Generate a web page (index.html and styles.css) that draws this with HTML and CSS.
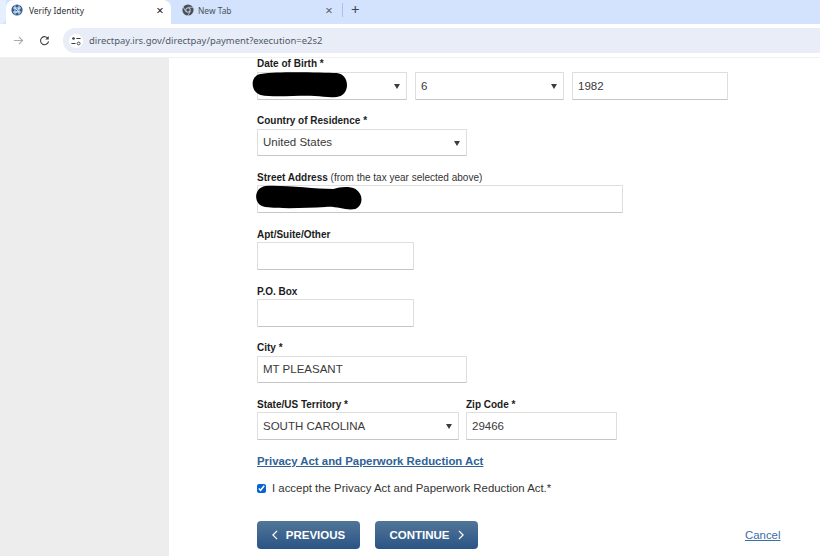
FILE: index.html
```html
<!DOCTYPE html>
<html lang="en">
<head>
<meta charset="utf-8">
<title>Verify Identity</title>
<link rel="stylesheet" href="styles.css">
</head>
<body>
<header class="chrome">
  <div class="tabstrip">
    <div class="tab-stub"></div>
    <div class="tab active">
      <svg class="favicon" viewBox="0 0 12 12"><circle cx="6" cy="6" r="5.6" fill="#2f5f96"/><path d="M2 4h8M2 8h8M4 1.500v9M8 1.500v9M4 4l4 4M8 4L5 9" stroke="#dfe9f5" stroke-width="1" fill="none"/></svg>
      <span class="tab-title">Verify Identity</span>
      <span class="tab-close dark">×</span>
    </div>
    <div class="tab inactive">
      <svg class="favicon" viewBox="0 0 12 12"><circle cx="6" cy="6" r="5.600" fill="#4a4f55"/><circle cx="6" cy="6" r="2.600" fill="#d3e3fd"/><circle cx="6" cy="6" r="1.800" fill="#4a4f55"/><path d="M6 3.300h5M3.700 7.400L1.200 3M8.300 7.400L5.800 11.500" stroke="#d3e3fd" stroke-width=".7"/></svg>
      <span class="tab-title grey">New Tab</span>
      <span class="tab-close">×</span>
    </div>
    <span class="divider"></span>
    <span class="plus">+</span>
  </div>
  <div class="toolbar">
    <svg class="nav-icon forward" viewBox="0 0 12 12"><path d="M1 6h9.500M6.500 2l4 4-4 4" fill="none" stroke="#a9abae" stroke-width="1.200"/></svg>
    <svg class="nav-icon reload" viewBox="0 0 12 12"><path d="M10 4.200A4.400 4.400 0 1 0 10.400 7" fill="none" stroke="#3c4043" stroke-width="1.200"/><path d="M10.600 1v3.800H6.800z" fill="#3c4043"/></svg>
    <div class="omnibox">
      <span class="site-btn"><svg viewBox="0 0 12 12"><circle cx="3" cy="3" r="1.600" fill="#3c4043"/><path d="M6.500 3h5M.5 9h5" stroke="#3c4043" stroke-width="1.200"/><circle cx="9.200" cy="9" r="1.700" fill="none" stroke="#3c4043" stroke-width="1.100"/></svg></span>
      <span class="url">directpay.irs.gov/directpay/payment?execution=e2s2</span>
    </div>
  </div>
</header>
<div class="page">
  <aside class="side"></aside>
  <main class="form">
    <div class="field f-dob">
      <label class="lab">Date of Birth *</label>
      <div class="row gap8">
        <div class="select w150"></div>
        <div class="select w149">6</div>
        <div class="input w156">1982</div>
      </div>
      <svg class="blob blob-dob" viewBox="0 0 96 26"><path d="M8 2C30-1 70 1 84 1c14 1 14 23 0 24-8 1-14-1-22-1-16-1-40 2-54-1C-2 20-3 4 8 2z" fill="#000"/></svg>
    </div>
    <div class="field f-country">
      <label class="lab">Country of Residence *</label>
      <div class="select w210 lift">United States</div>
    </div>
    <div class="field f-street">
      <label class="lab drop">Street Address <span class="normal">(from the tax year selected above)</span></label>
      <div class="input w366 tall"></div>
      <svg class="blob blob-street" viewBox="0 0 106 25"><path d="M10 1c20-1 48 3 68 3 6-2 16-3 22 0 8 5 8 16 0 20-10 2-18-3-30-2-20 1-44 2-60 0C-2 21-3 3 10 1z" fill="#000"/></svg>
    </div>
    <div class="field f-apt">
      <label class="lab drop">Apt/Suite/Other</label>
      <div class="input w157 tall"></div>
    </div>
    <div class="field f-po">
      <label class="lab drop">P.O. Box</label>
      <div class="input w157 tall"></div>
    </div>
    <div class="field f-city">
      <label class="lab">City *</label>
      <div class="input w210 lift2">MT PLEASANT</div>
    </div>
    <div class="row f-state">
      <div class="field">
        <label class="lab drop">State/US Territory *</label>
        <div class="select w202 tall">SOUTH CAROLINA</div>
      </div>
      <div class="field">
        <label class="lab drop">Zip Code *</label>
        <div class="input w151 tall">29466</div>
      </div>
    </div>
    <a class="privacy" href="#">Privacy Act and Paperwork Reduction Act</a>
    <label class="accept"><input class="check" type="checkbox" checked>I accept the Privacy Act and Paperwork Reduction Act.*</label>
    <div class="actions">
      <a class="btn" href="#"><svg class="chev" viewBox="0 0 7 12"><path d="M6 1L1 6l5 5" fill="none" stroke="#fff" stroke-width="1.500"/></svg>PREVIOUS</a>
      <a class="btn" href="#">CONTINUE<svg class="chev" viewBox="0 0 7 12"><path d="M1 1l5 5-5 5" fill="none" stroke="#fff" stroke-width="1.500"/></svg></a>
      <a class="cancel" href="#">Cancel</a>
    </div>
  </main>
</div>
</body>
</html>
```
FILE: styles.css
```css
* { box-sizing: border-box; }
html, body { margin: 0; height: 100%; overflow: hidden; background: #fff; }
body { font-family: "Liberation Sans", Arial, sans-serif; color: #333; width: 820px; height: 556px; }

.chrome { height: 58px; border-bottom: 1px solid #eef0f2; font-family: "Noto Sans", "Open Sans", sans-serif; }
.tabstrip { height: 24px; background: #d3e3fd; display: flex; align-items: flex-start; position: relative; }
.tab-stub { width: 6px; height: 24px; background: #e6effd; border-radius: 0 0 8px 0; }
.tab { height: 24px; display: flex; align-items: center; font-size: 8.400px; padding-bottom: 4px; }
.tab.active { width: 165px; background: #fff; border-radius: 8px 8px 0 0; padding-left: 5px; padding-right: 5px; }
.tab.inactive { width: 171px; padding-left: 11px; padding-right: 7px; }
.favicon { width: 12px; height: 12px; flex: none; margin-right: 6px; }
.tab.inactive .favicon { margin-right: 4px; }
.tab-title { flex: 1; color: #2b2f33; white-space: nowrap; }
.tab-title.grey { color: #4b5157; }
.tab-close { font-size: 13px; line-height: 13px; color: #5c6166; width: 12px; text-align: center; }
.tab-close.dark { color: #1f2226; }
.divider { width: 1px; height: 14px; background: #a6c2ea; margin-top: 3px; }
.plus { font-size: 15px; line-height: 15px; color: #3f454b; margin: 2px 0 0 8px; }

.toolbar { height: 33px; background: #fff; display: flex; align-items: center; padding-left: 13px; }
.nav-icon { width: 11px; height: 11px; flex: none; }
.reload { margin-left: 15px; }
.omnibox { margin-left: 13px; flex: 1; height: 25px; background: #e9edf7; border-radius: 12px 0 0 12px; display: flex; align-items: center; padding-left: 8px; }
.site-btn { width: 14px; height: 14px; border-radius: 7px; background: #fff; display: flex; align-items: center; justify-content: center; margin-left: -2px; }
.site-btn svg { width: 10px; height: 10px; }
.url { margin-left: 6px; font-size: 9.450px; color: #4f5a68; white-space: nowrap; }

.page { display: flex; height: 498px; }
.side { width: 169px; background: #ededed; flex: none; }
.form { flex: 1; padding-left: 88px; position: relative; }

.field { position: relative; }
.lab { display: block; font-size: 10px; font-weight: 700; line-height: 12px; color: #1c1c1c; height: 14px; }
.drop { padding-top: 1px; }
.normal { font-weight: 400; color: #333; }
.row { display: flex; }
.gap8 { gap: 8px; }

.select, .input {
  height: 28px; border: 1px solid #dedede; border-bottom-color: #c6c6c6; background: #fff;
  font-size: 11.500px; color: #3a3a3a; display: flex; align-items: center; padding-left: 5px; position: relative; border-radius: 1px;
}
.select::after {
  content: ""; position: absolute; right: 6px; top: 11px;
  border-left: 3.500px solid transparent; border-right: 3.500px solid transparent; border-top: 5px solid #3c3c3c;
}
.lift { padding-bottom: 1px; }
.lift2 { padding-bottom: 2px; }
.tall { height: 28px; }
.w150 { width: 150px; } .w149 { width: 149px; } .w156 { width: 156px; }
.w210 { width: 210px; } .w366 { width: 366px; } .w157 { width: 157px; }
.w202 { width: 202px; } .w151 { width: 151px; }

.blob { position: absolute; display: block; }
.blob-dob { left: -5px; top: 14px; width: 97px; height: 26px; }
.blob-street { left: -2px; top: 14px; width: 107px; height: 25px; }

.f-country { margin-top: 15px; }
.f-country .select { height: 27px; }
.f-street { margin-top: 15px; }
.f-apt { margin-top: 15px; }
.f-po { margin-top: 15px; }
.f-city { margin-top: 15px; }
.f-city .input { height: 27px; }
.f-state { margin-top: 15px; gap: 7px; }

.privacy { display: block; margin-top: 15px; font-size: 11.400px; font-weight: 700; line-height: 13px; color: #2f6296; text-decoration: underline; }
.accept { display: flex; align-items: center; margin-top: 13px; font-size: 11.400px; line-height: 14px; color: #333; }
.check { width: 9px; height: 9px; margin: 0 6px 0 0; accent-color: #0b63d1; }

.actions { display: flex; align-items: center; margin-top: 26px; position: relative; }
.btn {
  width: 103px; height: 28px; border-radius: 4px; background: linear-gradient(#527699, #2a5485);
  color: #fff; font-size: 11.500px; font-weight: 700; text-decoration: none; display: flex; align-items: center; justify-content: center; gap: 8px;
}
.btn + .btn { margin-left: 15px; }
.chev { width: 6px; height: 10px; }
.cancel { margin-left: 267px; font-size: 11.400px; color: #3a6ea5; text-decoration: underline; }
```
